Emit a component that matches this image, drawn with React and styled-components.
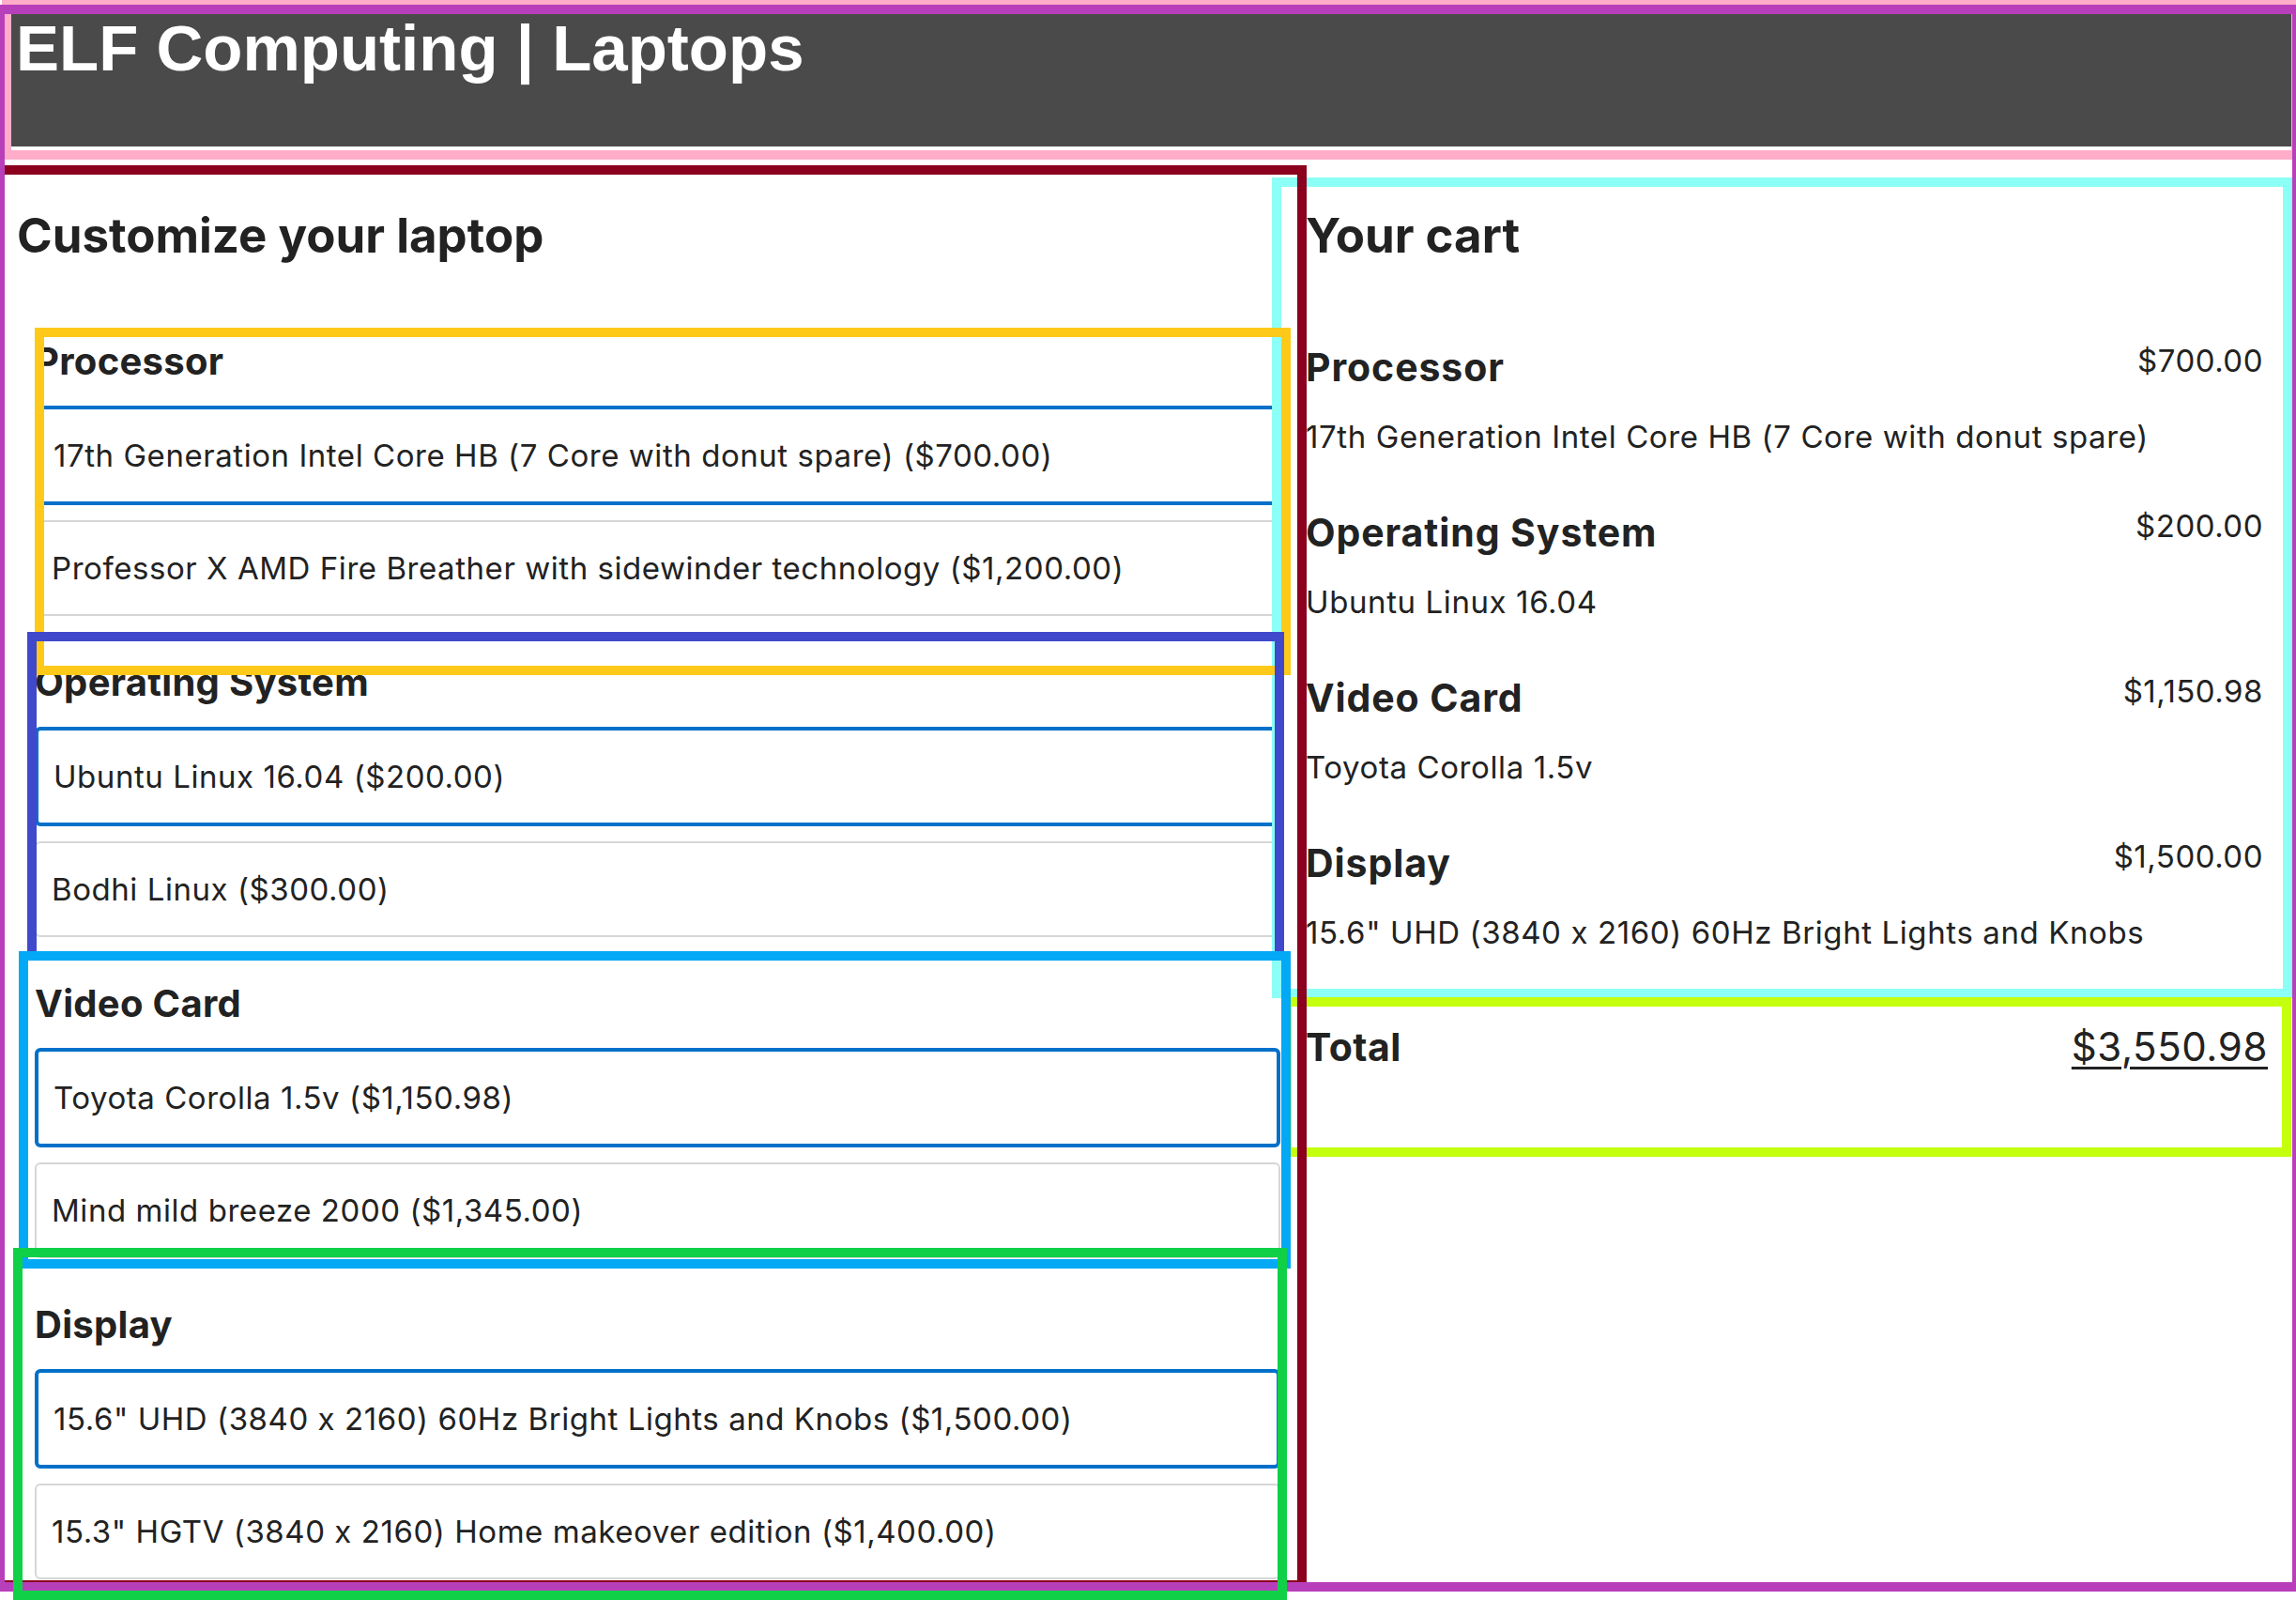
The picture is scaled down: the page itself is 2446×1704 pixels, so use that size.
import React from 'react';
import styled, { createGlobalStyle, css } from 'styled-components';

const GlobalStyle = createGlobalStyle`
  html, body { margin: 0; padding: 0; background: #fff; }
  body {
    font-family: Inter, "Noto Sans", sans-serif;
    font-feature-settings: "calt" 0;
    color: #222;
    overflow: hidden;
  }
  *, *::before, *::after { box-sizing: border-box; }
`;

/* debug outline drawn over the content, like a layout inspector */
const frame = css`
  position: relative;
  &::after {
    content: "";
    position: absolute;
    top: ${(p) => p.$t ?? -10}px;
    right: ${(p) => p.$r ?? -10}px;
    bottom: ${(p) => p.$b ?? -10}px;
    left: ${(p) => p.$l ?? -10}px;
    border: 10px solid ${(p) => p.$c};
    z-index: ${(p) => p.$z ?? 1};
    pointer-events: none;
  }
`;

const Page = styled.div`
  ${frame}
  width: 2446px;
  height: 1704px;
  overflow: hidden;
  display: flex;
  flex-direction: column;
`;

const Header = styled.header`
  ${frame}
  margin: 5px 5px 0 12px;
  height: 155px;
  padding-bottom: 4px;
`;

const TitleBar = styled.div`
  height: 151px;
  background: #4a4a4a;
  padding: 11px 6px 0 5px;
`;

const Title = styled.h1`
  margin: 0;
  font-family: "Liberation Sans", Arial, sans-serif;
  font-weight: 700;
  font-size: 69px;
  line-height: 72px;
  color: #fff;
`;

const Columns = styled.main`
  display: flex;
  align-items: flex-start;
  margin-top: 26px;
`;

const LeftColumn = styled.section`
  ${frame}
  width: 1377px;
  margin-left: 5px;
  padding: 34px 18px 1px 13px;
`;

const Heading = styled.h2`
  margin: 0;
  font-size: 51px;
  font-weight: 700;
  line-height: 62px;
  color: #222;
`;

const SectionList = styled.div`
  margin-top: 79px;
  padding-left: 19px;
  display: flex;
  flex-direction: column;
  gap: 47px;
`;

const Feature = styled.fieldset`
  ${frame}
  margin: 0;
  padding: 0;
  border: 0;
  min-width: 0;
  display: flex;
  flex-direction: column;
`;

const FeatureLabel = styled.h3`
  margin: 0 0 23px;
  font-size: 40px;
  font-weight: 700;
  letter-spacing: 0.3px;
  line-height: 48px;
  color: #222;
`;

const Options = styled.div`
  display: flex;
  flex-direction: column;
  gap: 16px;
`;

const Option = styled.label`
  display: flex;
  align-items: center;
  height: ${(p) => (p.$selected ? 106 : 102)}px;
  padding: 0 16px;
  border: ${(p) => (p.$selected ? '4px solid #0070c9' : '2px solid #d6d6d6')};
  border-radius: 6px;
  font-size: 33px;
  letter-spacing: 0.55px;
  line-height: 38px;
  color: #222;
  white-space: nowrap;
`;

const RightColumn = styled.aside`
  width: 1067px;
  margin: 13px 0 0 -17px;
  display: flex;
  flex-direction: column;
`;

const CartBox = styled.section`
  ${frame}
  padding: 21px 21px 41px 26px;
`;

const CartList = styled.div`
  margin-top: 85px;
  display: flex;
  flex-direction: column;
  gap: 59px;
`;

const CartItem = styled.div`
  display: flex;
  flex-direction: column;
`;

const ItemHead = styled.div`
  display: flex;
  justify-content: space-between;
  align-items: flex-start;
  margin-bottom: 31px;
`;

const ItemName = styled.h3`
  margin: 0;
  font-size: 41px;
  font-weight: 700;
  letter-spacing: 0.9px;
  line-height: 48px;
  color: #222;
`;

const ItemCost = styled.div`
  font-size: 33px;
  letter-spacing: 0.5px;
  line-height: 34px;
  color: #222;
`;

const ItemChoice = styled.div`
  font-size: 33px;
  letter-spacing: 0.6px;
  line-height: 38px;
  color: #222;
`;

const TotalBox = styled.div`
  ${frame}
  margin: 19px 1px 0 11px;
  height: 150px;
  padding: 19px 15px 0 15px;
  display: flex;
  justify-content: space-between;
  align-items: baseline;
`;

const TotalLabel = styled.div`
  font-size: 41px;
  font-weight: 700;
  letter-spacing: 0.5px;
  line-height: 48px;
  color: #222;
`;

const TotalValue = styled.div`
  font-size: 42px;
  letter-spacing: 0.6px;
  line-height: 48px;
  color: #222;
  text-decoration: underline;
  text-underline-offset: 6px;
  text-decoration-thickness: 3px;
`;

const USD = new Intl.NumberFormat('en-US', { style: 'currency', currency: 'USD' });

const FEATURES = [
  {
    name: 'Processor',
    frame: { $c: '#ffc91a', $t: -12, $l: 0, $r: -11, $b: -63, $z: 3 },
    options: [
      { name: '17th Generation Intel Core HB (7 Core with donut spare)', cost: 700 },
      { name: 'Professor X AMD Fire Breather with sidewinder technology', cost: 1200 },
    ],
  },
  {
    name: 'Operating System',
    frame: { $c: '#4049cc', $t: -30, $l: -8, $r: -4, $b: -25, $z: 4 },
    options: [
      { name: 'Ubuntu Linux 16.04', cost: 200 },
      { name: 'Bodhi Linux', cost: 300 },
    ],
  },
  {
    name: 'Video Card',
    frame: { $c: '#03a9f4', $t: -32, $l: -17, $r: -11, $b: -11, $z: 5 },
    options: [
      { name: 'Toyota Corolla 1.5v', cost: 1150.98 },
      { name: 'Mind mild breeze 2000', cost: 1345 },
    ],
  },
  {
    name: 'Display',
    frame: { $c: '#10d048', $t: -58, $l: -23, $r: -7, $b: -22, $z: 7 },
    options: [
      { name: '15.6" UHD (3840 x 2160) 60Hz Bright Lights and Knobs', cost: 1500 },
      { name: '15.3" HGTV (3840 x 2160) Home makeover edition', cost: 1400 },
    ],
  },
];

export default function App() {
  const selected = FEATURES.map((f) => f.options[0]);
  const total = selected.reduce((s, o) => s + o.cost, 0);

  return (
    <>
      <GlobalStyle />
      <Page $c="#b83fba" $t={5} $l={-5} $r={-6} $b={9} $z={6}>
        <Header $c="#ffadc8" $z={1}>
          <TitleBar>
            <Title>ELF Computing | Laptops</Title>
          </TitleBar>
        </Header>
        <Columns>
          <LeftColumn $c="#8a001e" $z={2}>
            <Heading>Customize your laptop</Heading>
            <SectionList>
              {FEATURES.map((f) => (
                <Feature key={f.name} {...f.frame}>
                  <FeatureLabel>{f.name}</FeatureLabel>
                  <Options>
                    {f.options.map((o, i) => (
                      <Option key={o.name} $selected={i === 0}>
                        {o.name} ({USD.format(o.cost)})
                      </Option>
                    ))}
                  </Options>
                </Feature>
              ))}
            </SectionList>
          </LeftColumn>
          <RightColumn>
            <CartBox $c="#8cfff7" $z={1}>
              <Heading>Your cart</Heading>
              <CartList>
                {FEATURES.map((f, i) => (
                  <CartItem key={f.name}>
                    <ItemHead>
                      <ItemName>{f.name}</ItemName>
                      <ItemCost>{USD.format(selected[i].cost)}</ItemCost>
                    </ItemHead>
                    <ItemChoice>{selected[i].name}</ItemChoice>
                  </CartItem>
                ))}
              </CartList>
            </CartBox>
            <TotalBox $c="#c4ff0e" $z={1}>
              <TotalLabel>Total</TotalLabel>
              <TotalValue>{USD.format(total)}</TotalValue>
            </TotalBox>
          </RightColumn>
        </Columns>
      </Page>
    </>
  );
}
